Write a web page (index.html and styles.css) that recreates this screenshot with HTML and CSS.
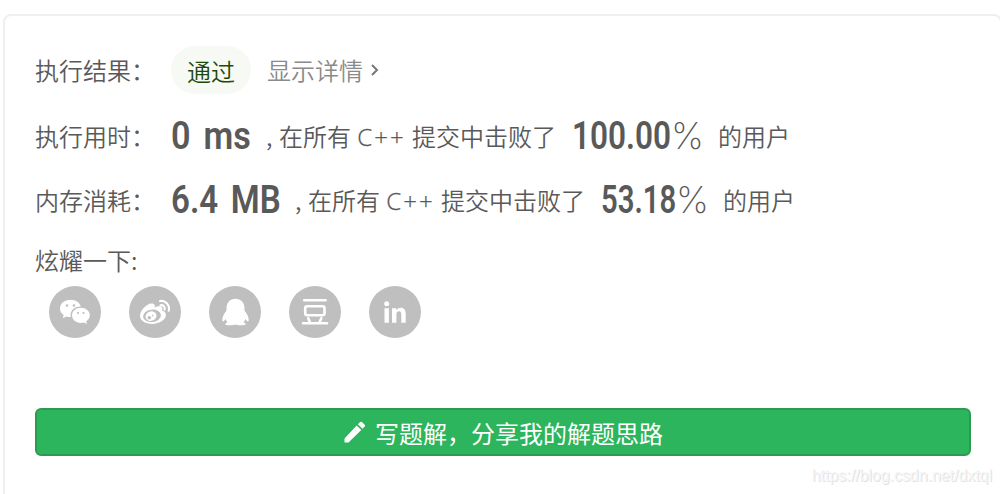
FILE: index.html
```html
<!DOCTYPE html>
<html lang="zh-CN">
<head>
    <meta charset="UTF-8">
    <meta name="viewport" content="width=device-width, initial-scale=1.0">
    <title>执行结果</title>
    <link rel="stylesheet" href="styles.css">
</head>
<body>
    <div class="card">
        <div class="row status">
            <span class="label">执行结果：</span>
            <span class="badge">通过</span>
            <a class="detail">显示详情
                <svg width="10" height="14" viewBox="0 0 10 14"><path d="M2 2l5 5-5 5" fill="none" stroke="#777" stroke-width="2"/></svg>
            </a>
        </div>
        <div class="row runtime">
            <span class="label">执行用时：</span>
            <span class="value">0 ms</span>
            <span class="comma">,</span>
            <span class="text">在所有 <span class="lang">C++</span> 提交中击败了</span>
            <span class="rate">100.00</span><span class="percent">%</span>
            <span class="text">的用户</span>
        </div>
        <div class="row memory">
            <span class="label">内存消耗：</span>
            <span class="value">6.4 MB</span>
            <span class="comma">,</span>
            <span class="text">在所有 <span class="lang">C++</span> 提交中击败了</span>
            <span class="rate">53.18</span><span class="percent">%</span>
            <span class="text">的用户</span>
        </div>
        <div class="row share">炫耀一下:</div>
        <div class="icons">
            <!-- wechat -->
            <svg class="icon" viewBox="0 0 52 52">
                <path fill="#fff" d="M21.500 13.800c-6 0-10.500 3.900-10.500 8.800 0 2.700 1.500 5 3.700 6.600l-1 3.100 3.700-1.900c1.500.5 3 .7 4.500.6-1.500-5.800 3.200-10.600 9.800-10.500-.9-3.900-5-6.700-10.200-6.700z"/>
                <path fill="#fff" d="M31.800 21.800c-5 0-8.800 3.300-8.800 7.500s3.800 7.600 8.800 7.600c1.100 0 2.200-.2 3.200-.5l3 1.600-.8-2.700c2.200-1.400 3.600-3.500 3.600-6 0-4.200-4-7.500-9-7.500z"/>
                <g fill="#bfbfbf"><circle cx="18" cy="19.500" r="1.300"/><circle cx="25" cy="19.500" r="1.300"/><circle cx="29" cy="27" r="1.100"/><circle cx="34.500" cy="27" r="1.100"/></g>
            </svg>
            <!-- weibo -->
            <svg class="icon" viewBox="0 0 52 52">
                <path fill="#fff" d="M24.600 17.900c-3-1.500-7.200.9-10.200 4.400-2 2.400-3.400 5.200-3.400 7.400 0 5 5.900 8.200 12 8.200 8 0 13.900-4.700 13.900-8.900 0-2.400-1.800-3.800-4-4.400.7-2 .6-3.300-.7-4-1.600-.8-4.200-.2-6.800.7.800-1.600.5-2.800-.8-3.400z"/>
                <ellipse cx="23" cy="29.800" rx="9" ry="6.200" transform="rotate(-7 23 29.800)" fill="#bfbfbf"/>
                <ellipse cx="22" cy="30.200" rx="5.600" ry="4.700" transform="rotate(-20 22 30.200)" fill="#fff"/>
                <circle cx="20.300" cy="31.700" r="1.800" fill="#bfbfbf"/><circle cx="23.600" cy="29.600" r=".8" fill="#bfbfbf"/>
                <path fill="none" stroke="#fff" stroke-width="2.100" stroke-linecap="round" d="M31 15c5.500-1 10.300 4.200 8.700 9.800M31.500 19.200c2.700-.6 4.800 1.800 4 4.400"/>
            </svg>
            <!-- qq -->
            <svg class="icon" viewBox="0 0 52 52">
                <path fill="#fff" d="M26.500 12.700c-5.500 0-9 4.200-9 9.300v2.600c-2.500 3.200-4.200 6.700-4.200 9.200 0 1.600.6 2 1.300 1.400.8-.5 1.400-1.300 2-2.200.3 1.200 1 2.400 1.900 3.400-1.500.3-2.200.9-2.200 1.500 0 1.100 2.500 1.500 5 1.400 2.200 0 4-.3 5.200-.8 1.200.5 3 .8 5.200.8 2.500.1 5-.3 5-1.400 0-.6-.7-1.200-2.200-1.500.9-1 1.600-2.200 1.900-3.400.6.900 1.200 1.700 2 2.200.7.600 1.300.2 1.300-1.400 0-2.500-1.700-6-4.200-9.200V22c0-5.100-3.500-9.300-9-9.300z"/>
            </svg>
            <!-- douban -->
            <svg class="icon" viewBox="0 0 52 52">
                <g fill="none" stroke="#fff" stroke-width="2.600" stroke-linecap="round">
                    <path d="M15.200 14.300h21.500M14 37.300h24"/>
                    <rect x="16.200" y="20.300" width="19.300" height="9" rx="2"/>
                    <path d="M19.300 32.300l1.700 4.500M32.300 32.300l-1.900 4.500"/>
                </g>
            </svg>
            <!-- linkedin -->
            <svg class="icon" viewBox="0 0 52 52">
                <circle cx="17.700" cy="17.800" r="2.500" fill="#fff"/>
                <path fill="#fff" d="M15.500 22.200h4.400v14.500h-4.400zM23 22.200h4.200v2c1-1.500 2.500-2.400 4.500-2.400 3.500 0 5 2.300 5 6v8.900h-4.400v-8.300c0-2-.7-3.200-2.200-3.200-1.700 0-2.700 1.200-2.700 3.300v8.200H23z"/>
            </svg>
        </div>
        <button class="btn">
            <svg width="24" height="24" viewBox="0 0 24 24"><path fill="#fff" d="M1.500 18.400v4h4L18.300 9.900l-4.600-4.500zM21.700 6.500a1.200 1.200 0 0 0 0-1.700l-2.800-2.700a1.200 1.200 0 0 0-1.700 0l-2.300 2.200 4.600 4.500z"/></svg>
            <span>写题解，分享我的解题思路</span>
        </button>
    </div>
    <div class="watermark">https://blog.csdn.net/dxtql</div>
</body>
</html>
```
FILE: styles.css
```css
* {
    box-sizing: border-box;
}
body {
    margin: 0;
    height: 494px;
    overflow: hidden;
    background: #fff;
    font-family: "Noto Sans CJK SC", sans-serif;
    font-size: 24px;
    font-weight: 350;
    color: #595959;
}
.card {
    width: 999px;
    height: 500px;
    margin: 14px 0 0 3px;
    padding: 30px 28px 0 30px;
    border: 2px solid #efefef;
    border-radius: 8px;
}
.row {
    display: flex;
    align-items: center;
    height: 48px;
    line-height: 48px;
    white-space: nowrap;
}
.status {
    line-height: 50px;
}
.label {
    width: 136px;
    flex: none;
}
.badge {
    width: 80px;
    height: 48px;
    border-radius: 24px;
    background: #f7faf4;
    color: #1c4a0d;
    text-align: center;
}
.detail {
    display: flex;
    align-items: center;
    gap: 7px;
    margin-left: 16px;
    color: #8a8a8a;
}
.runtime {
    height: 64px;
    margin-top: 10px;
}
.memory {
    height: 64px;
}
.value,
.rate,
.percent {
    flex: none;
    font-size: 38px;
    line-height: 48px;
}
.value,
.rate {
    font-family: Roboto, sans-serif;
    font-weight: 600;
    transform-origin: left;
}
.value {
    width: 95px;
    transform: scaleX(.9);
    word-spacing: 5px;
}
.memory .value {
    width: 124px;
    transform: scaleX(.87);
}
.comma {
    width: 13px;
}
.text {
    flex: none;
    word-spacing: 1px;
}
.lang {
    font-family: "Open Sans", sans-serif;
    font-weight: 300;
    letter-spacing: 2px;
    -webkit-text-stroke: .3px #595959;
}
.rate {
    width: 99px;
    margin-left: 16px;
    transform: scaleX(.83);
}
.memory .rate {
    width: 75px;
    transform: scaleX(.77);
}
.percent {
    width: 47px;
    font-family: Inter, sans-serif;
    font-size: 37px;
    font-weight: 250;
}
.share {
    margin-top: 4px;
}
.icons {
    display: flex;
    gap: 28px;
    margin: 2px 0 0 14px;
}
.icon {
    width: 52px;
    height: 52px;
    border-radius: 50%;
    background: #bfbfbf;
}
.btn {
    display: flex;
    align-items: center;
    justify-content: center;
    gap: 8px;
    width: 936px;
    height: 48px;
    margin-top: 70px;
    padding: 0;
    border: 2px solid #2d9a52;
    border-radius: 6px;
    background: #2db55d;
    color: #fff;
    font-family: inherit;
    font-size: 24px;
    font-weight: 400;
}
.btn span {
    padding-top: 2px;
    line-height: 42px;
}
.watermark {
    position: absolute;
    right: 8px;
    bottom: 8px;
    font-family: "Liberation Sans", sans-serif;
    font-size: 15.900px;
    font-weight: 400;
    line-height: 20px;
    color: #f6f6f6;
    text-shadow: 1px 1px 0 #e2e2e2;
}
```
